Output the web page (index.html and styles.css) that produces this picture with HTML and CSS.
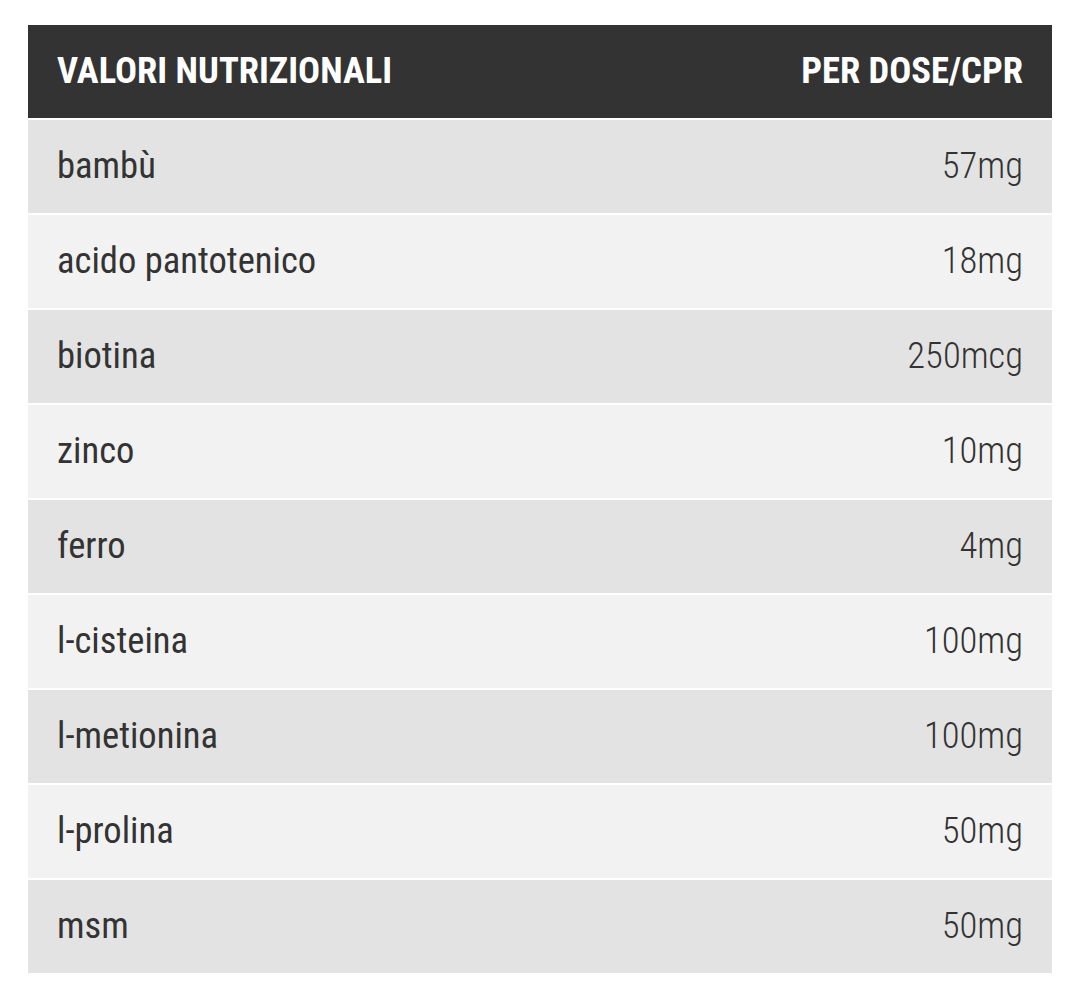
FILE: index.html
```html
<!DOCTYPE html>
<html lang="it">
<head>
<meta charset="utf-8">
<title>Valori nutrizionali</title>
<link rel="stylesheet" href="styles.css">
</head>
<body>
<table class="nutri">
  <thead>
    <tr><th class="name">VALORI NUTRIZIONALI</th><th class="val">PER DOSE/CPR</th></tr>
  </thead>
  <tbody>
    <tr><td class="name">bambù</td><td class="val">57mg</td></tr>
    <tr><td class="name">acido pantotenico</td><td class="val">18mg</td></tr>
    <tr><td class="name">biotina</td><td class="val">250mcg</td></tr>
    <tr><td class="name">zinco</td><td class="val">10mg</td></tr>
    <tr><td class="name">ferro</td><td class="val">4mg</td></tr>
    <tr><td class="name">l-cisteina</td><td class="val">100mg</td></tr>
    <tr><td class="name">l-metionina</td><td class="val">100mg</td></tr>
    <tr><td class="name">l-prolina</td><td class="val">50mg</td></tr>
    <tr><td class="name">msm</td><td class="val">50mg</td></tr>
  </tbody>
</table>
</body>
</html>
```
FILE: styles.css
```css
html, body {
  margin: 0;
  padding: 0;
  background: #ffffff;
}
body {
  padding: 25px 28px 0 28px;
  font-family: "Roboto Condensed", Roboto, "Liberation Sans", sans-serif;
  font-stretch: condensed;
}
.nutri {
  width: 1024px;
  border-collapse: collapse;
  color: #333333;
}
.nutri th, .nutri td {
  height: 93px;
  padding: 0 29px;
  font-size: 36.6px;
  line-height: 1;
  vertical-align: middle;
}
.nutri thead tr {
  background: #333333;
  color: #ffffff;
}
.nutri th {
  font-weight: 700;
}
.nutri tbody tr {
  border-top: 2px solid #ffffff;
}
.nutri tbody tr:nth-child(odd) { background: #e3e3e3; }
.nutri tbody tr:nth-child(even) { background: #f2f2f2; }
.nutri .name { text-align: left; }
.nutri .val { text-align: right; }
.nutri td.name { font-weight: 400; }
.nutri td.val { font-weight: 300; }
```
